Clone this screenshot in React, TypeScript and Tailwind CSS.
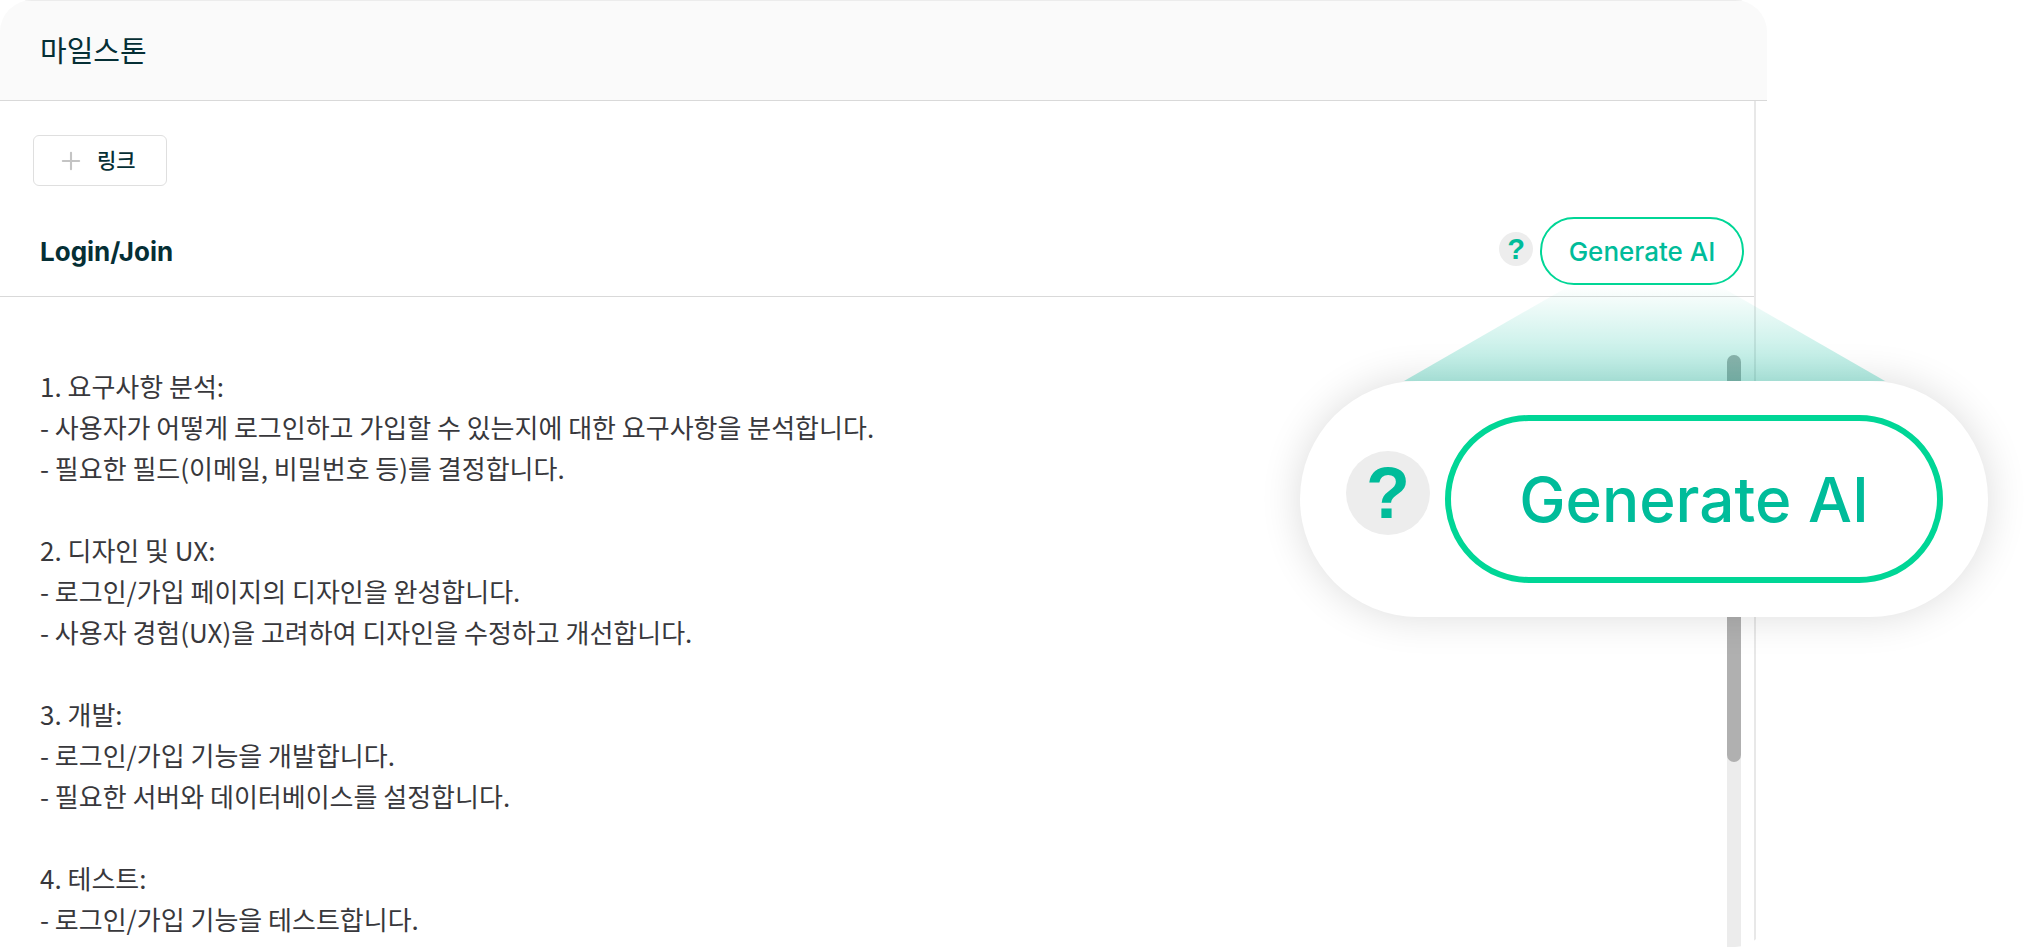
import { Plus } from "lucide-react";

interface Section {
  title: string;
  items: string[];
}

const sections: Section[] = [
  {
    title: "1. 요구사항 분석:",
    items: [
      "- 사용자가 어떻게 로그인하고 가입할 수 있는지에 대한 요구사항을 분석합니다.",
      "- 필요한 필드(이메일, 비밀번호 등)를 결정합니다.",
    ],
  },
  {
    title: "2. 디자인 및 UX:",
    items: [
      "- 로그인/가입 페이지의 디자인을 완성합니다.",
      "- 사용자 경험(UX)을 고려하여 디자인을 수정하고 개선합니다.",
    ],
  },
  {
    title: "3. 개발:",
    items: [
      "- 로그인/가입 기능을 개발합니다.",
      "- 필요한 서버와 데이터베이스를 설정합니다.",
    ],
  },
  {
    title: "4. 테스트:",
    items: ["- 로그인/가입 기능을 테스트합니다."],
  },
];

function GenerateCallout() {
  return (
    <div className="absolute top-[285px] right-11 w-[688px]">
      <div className="relative mt-24 flex h-[236px] items-center rounded-full bg-white pr-[45px] pl-[46px] shadow-[0_0_40px_rgba(0,0,0,0.14)]">
        {/* Haz que une el botón con su ampliación */}
        <svg
          className="absolute bottom-full left-[104px] h-24 w-[481px]"
          viewBox="0 0 481 96"
          preserveAspectRatio="none"
          aria-hidden="true"
        >
          <defs>
            <linearGradient id="beam" x1="0" y1="0" x2="0" y2="1">
              <stop offset="0" stopColor="#00be9b" stopOpacity="0" />
              <stop offset="1" stopColor="#00b899" stopOpacity="0.31" />
            </linearGradient>
          </defs>
          <path d="M167 0H314L481 96H0Z" fill="url(#beam)" />
        </svg>
        <button
          aria-label="도움말"
          className="mb-3 flex size-[84px] shrink-0 items-center justify-center rounded-full bg-[#ededed] font-['Liberation_Sans',sans-serif] text-[72px] leading-none font-bold text-[#00bc9a]"
        >
          ?
        </button>
        <button className="ml-[15px] h-[168px] flex-1 rounded-full border-6 border-[#00d696] bg-white text-[62px] font-medium whitespace-nowrap text-[#00bc9a]">
          Generate AI
        </button>
      </div>
    </div>
  );
}

export default function App() {
  return (
    <div className="relative h-screen overflow-hidden bg-white font-['Inter','Noto_Sans_CJK_KR',sans-serif]">
      <main className="mr-[265px] flex h-full flex-col overflow-hidden rounded-[32px]">
        <header className="flex h-[101px] shrink-0 items-center border-t border-b border-t-[#ececec] border-b-[#d9d9d9] bg-[#fafafa] px-10 pt-0.5">
          <h1 className="text-[29px] text-[#052f35]">마일스톤</h1>
        </header>

        <div className="mr-[11px] flex min-h-0 flex-1 flex-col border-r-2 border-[#e8e8e8]">
          <div className="px-[33px] pt-[34px]">
            <button className="flex h-[51px] w-[134px] items-center gap-3 rounded-md border border-[#dfdfdf] bg-white pl-[23px] text-[21px] font-medium text-[#052f35]">
              <Plus className="size-7 text-[#c4c4c4]" strokeWidth={1.8} />
              링크
            </button>
          </div>

          <div className="mt-[31px] flex items-center justify-between border-b border-[#d9d9d9] pr-[10px] pb-[11px] pl-10">
            <h2 className="text-[26px] font-bold text-[#052f35]">Login/Join</h2>
            <div className="flex items-center gap-[7px]">
              <button
                aria-label="도움말"
                className="mb-1 flex size-[34px] items-center justify-center rounded-full bg-[#ededed] font-['Liberation_Sans',sans-serif] text-[29px] leading-none font-bold text-[#00bc9a]"
              >
                ?
              </button>
              <button className="h-[68px] w-[204px] rounded-full border-2 border-[#00d696] bg-white text-[26px] font-medium text-[#00bc9a]">
                Generate AI
              </button>
            </div>
          </div>

          <div className="flex min-h-0 flex-1 pt-[58px] pr-[13px] pl-10">
            <div className="flex min-w-0 flex-1 flex-col gap-[41px] pt-[10px] font-['Noto_Sans_CJK_KR',sans-serif] text-[26px] leading-[41px] text-[#38383c]">
              {sections.map((section) => (
                <section key={section.title}>
                  <h3>{section.title}</h3>
                  {section.items.map((item) => (
                    <p key={item}>{item}</p>
                  ))}
                </section>
              ))}
            </div>
            <div className="w-[14px] rounded-t-full bg-[#ececec]">
              <div className="h-[407px] rounded-full bg-[#b0b0b0]" />
            </div>
          </div>
        </div>
      </main>

      <GenerateCallout />
    </div>
  );
}
